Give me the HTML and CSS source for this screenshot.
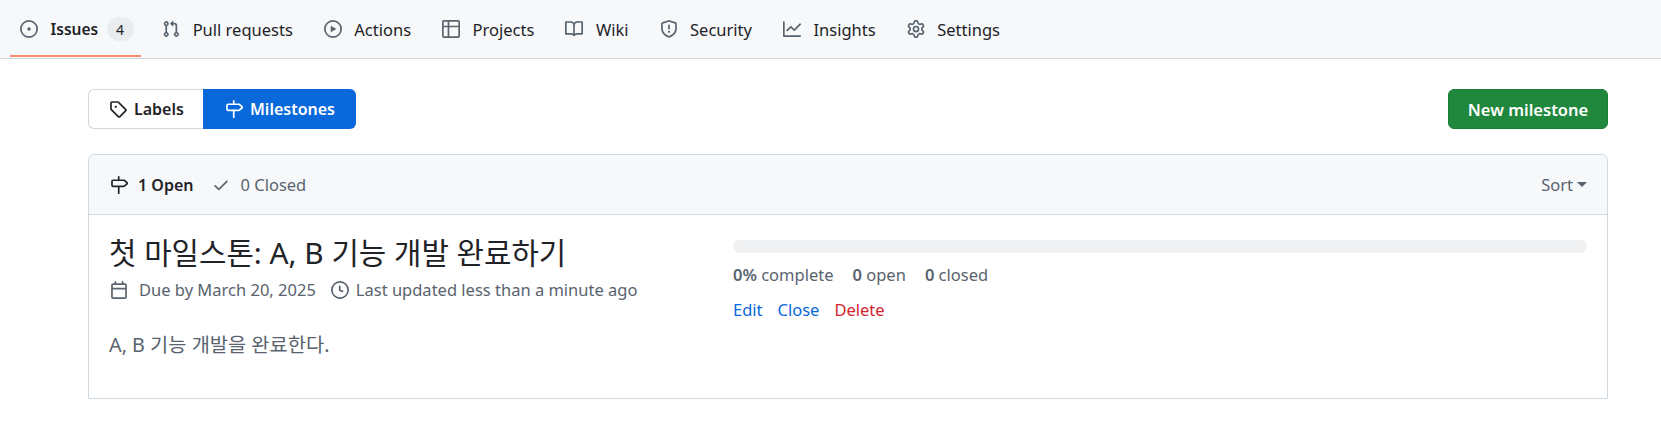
FILE: index.html
```html
<!DOCTYPE html>
<html lang="ko">
<head>
<meta charset="utf-8">
<title>Milestones</title>
<link rel="stylesheet" href="styles.css">
</head>
<body>
<svg class="sprite" aria-hidden="true">
  <symbol id="i-issue" viewBox="0 0 16 16"><path d="M8 9.5a1.5 1.5 0 1 0 0-3 1.5 1.5 0 0 0 0 3Z"/><path d="M8 0a8 8 0 1 1 0 16A8 8 0 0 1 8 0ZM1.5 8a6.5 6.5 0 1 0 13 0 6.5 6.5 0 0 0-13 0Z"/></symbol>
  <symbol id="i-pr" viewBox="0 0 16 16"><path d="M1.5 3.25a2.25 2.25 0 1 1 3 2.122v5.256a2.251 2.251 0 1 1-1.5 0V5.372A2.25 2.25 0 0 1 1.5 3.25Zm5.677-.177L9.573.677A.25.25 0 0 1 10 .854V2.5h1A2.5 2.5 0 0 1 13.5 5v5.628a2.251 2.251 0 1 1-1.5 0V5a1 1 0 0 0-1-1h-1v1.646a.25.25 0 0 1-.427.177L7.177 3.427a.25.25 0 0 1 0-.354ZM3.75 2.5a.75.75 0 1 0 0 1.5.75.75 0 0 0 0-1.5Zm0 9.5a.75.75 0 1 0 0 1.5.75.75 0 0 0 0-1.5Zm8.25.75a.75.75 0 1 0 1.5 0 .75.75 0 0 0-1.5 0Z"/></symbol>
  <symbol id="i-play" viewBox="0 0 16 16"><path d="M8 0a8 8 0 1 1 0 16A8 8 0 0 1 8 0ZM1.5 8a6.5 6.5 0 1 0 13 0 6.5 6.5 0 0 0-13 0Zm4.879-2.773 4.264 2.559a.25.25 0 0 1 0 .428l-4.264 2.559A.25.25 0 0 1 6 10.559V5.442a.25.25 0 0 1 .379-.215Z"/></symbol>
  <symbol id="i-table" viewBox="0 0 16 16"><path d="M0 1.75C0 .784.784 0 1.75 0h12.5C15.216 0 16 .784 16 1.75v12.5A1.75 1.75 0 0 1 14.25 16H1.75A1.75 1.75 0 0 1 0 14.25ZM6.5 6.5v8h7.75a.25.25 0 0 0 .25-.25V6.5Zm8-1.5V1.75a.25.25 0 0 0-.25-.25H6.5V5Zm-13 1.5v7.75c0 .138.112.25.25.25H5v-8ZM5 5V1.5H1.75a.25.25 0 0 0-.25.25V5Z"/></symbol>
  <symbol id="i-book" viewBox="0 0 16 16"><path d="M0 1.75A.75.75 0 0 1 .75 1h4.253c1.227 0 2.317.59 3 1.501A3.743 3.743 0 0 1 11.006 1h4.245a.75.75 0 0 1 .75.75v10.5a.75.75 0 0 1-.75.75h-4.507a2.25 2.25 0 0 0-1.591.659l-.622.621a.75.75 0 0 1-1.06 0l-.622-.621A2.25 2.25 0 0 0 5.258 13H.75a.75.75 0 0 1-.75-.75Zm7.251 10.324.004-5.073-.002-2.253A2.25 2.25 0 0 0 5.003 2.5H1.5v9h3.757a3.75 3.75 0 0 1 1.994.574ZM8.755 4.75l-.004 7.322a3.752 3.752 0 0 1 1.992-.572H14.5v-9h-3.495a2.25 2.25 0 0 0-2.25 2.25Z"/></symbol>
  <symbol id="i-shield" viewBox="0 0 16 16"><path d="M7.467.133a1.748 1.748 0 0 1 1.066 0l5.25 1.68A1.75 1.75 0 0 1 15 3.48V7c0 1.566-.32 3.182-1.303 4.682-.983 1.498-2.585 2.813-5.032 3.855a1.697 1.697 0 0 1-1.33 0c-2.447-1.042-4.049-2.357-5.032-3.855C1.32 10.182 1 8.566 1 7V3.48a1.75 1.75 0 0 1 1.217-1.667Zm.61 1.429a.25.25 0 0 0-.153 0l-5.25 1.68a.25.25 0 0 0-.174.238V7c0 1.358.275 2.666 1.057 3.86.784 1.194 2.121 2.34 4.366 3.297a.196.196 0 0 0 .154 0c2.245-.956 3.582-2.104 4.366-3.298C13.225 9.666 13.5 8.36 13.5 7V3.48a.251.251 0 0 0-.174-.237l-5.25-1.68ZM8.75 4.75v3a.75.75 0 0 1-1.5 0v-3a.75.75 0 0 1 1.5 0ZM9 10.5a1 1 0 1 1-2 0 1 1 0 0 1 2 0Z"/></symbol>
  <symbol id="i-graph" viewBox="0 0 16 16"><path d="M1.5 1.75V13.5h13.75a.75.75 0 0 1 0 1.5H.75a.75.75 0 0 1-.75-.75V1.75a.75.75 0 0 1 1.5 0Zm14.28 2.53-5.25 5.25a.75.75 0 0 1-1.06 0L7 7.06 4.28 9.78a.751.751 0 0 1-1.042-.018.751.751 0 0 1-.018-1.042l3.25-3.25a.75.75 0 0 1 1.06 0L10 7.94l4.72-4.72a.751.751 0 0 1 1.042.018.751.751 0 0 1 .018 1.042Z"/></symbol>
  <symbol id="i-gear" viewBox="0 0 16 16"><path d="M8 0a8.2 8.2 0 0 1 .701.031C9.444.095 9.99.645 10.16 1.29l.288 1.107c.018.066.079.158.212.224.231.114.454.243.668.386.123.082.233.09.299.071l1.103-.303c.644-.176 1.392.021 1.82.63.27.385.506.792.704 1.218.315.675.111 1.422-.364 1.891l-.814.806c-.049.048-.098.147-.088.294.016.257.016.515 0 .772-.01.147.038.246.088.294l.814.806c.475.469.679 1.216.364 1.891a7.977 7.977 0 0 1-.704 1.217c-.428.61-1.176.807-1.82.63l-1.102-.302c-.067-.019-.177-.011-.3.071a5.909 5.909 0 0 1-.668.386c-.133.066-.194.158-.211.224l-.29 1.106c-.168.646-.715 1.196-1.458 1.26a8.006 8.006 0 0 1-1.402 0c-.743-.064-1.289-.614-1.458-1.26l-.289-1.106c-.018-.066-.079-.158-.212-.224a5.738 5.738 0 0 1-.668-.386c-.123-.082-.233-.09-.299-.071l-1.103.303c-.644.176-1.392-.021-1.82-.63a8.12 8.12 0 0 1-.704-1.218c-.315-.675-.111-1.422.363-1.891l.815-.806c.05-.048.098-.147.088-.294a6.214 6.214 0 0 1 0-.772c.01-.147-.038-.246-.088-.294l-.815-.806C.635 6.045.431 5.298.746 4.623a7.92 7.92 0 0 1 .704-1.217c.428-.61 1.176-.807 1.82-.63l1.102.302c.067.019.177.011.3-.071.214-.143.437-.272.668-.386.133-.066.194-.158.211-.224l.29-1.106C6.009.645 6.556.095 7.299.03 7.53.01 7.764 0 8 0Zm-.571 1.525c-.036.003-.108.036-.137.146l-.289 1.105c-.147.561-.549.967-.998 1.189-.173.086-.34.183-.5.29-.417.278-.97.423-1.529.27l-1.103-.303c-.109-.03-.175.016-.195.045-.22.312-.412.644-.573.99-.014.031-.021.11.059.19l.815.806c.411.406.562.957.53 1.456a4.709 4.709 0 0 0 0 .582c.032.499-.119 1.05-.53 1.456l-.815.806c-.081.08-.073.159-.059.19.162.346.353.677.573.989.02.03.085.076.195.046l1.102-.303c.56-.153 1.113-.008 1.53.27.161.107.328.204.501.29.447.222.85.629.997 1.189l.289 1.105c.029.109.101.143.137.146a6.6 6.6 0 0 0 1.142 0c.036-.003.108-.036.137-.146l.289-1.105c.147-.561.549-.967.998-1.189.173-.086.34-.183.5-.29.417-.278.97-.423 1.529-.27l1.103.303c.109.029.175-.016.195-.045.22-.313.411-.644.573-.99.014-.031.021-.11-.059-.19l-.815-.806c-.411-.406-.562-.957-.53-1.456a4.709 4.709 0 0 0 0-.582c-.032-.499.119-1.05.53-1.456l.815-.806c.081-.08.073-.159.059-.19a6.464 6.464 0 0 0-.573-.989c-.02-.03-.085-.076-.195-.046l-1.102.303c-.56.153-1.113.008-1.53-.27a4.44 4.44 0 0 0-.501-.29c-.447-.222-.85-.629-.997-1.189l-.289-1.105c-.029-.11-.101-.143-.137-.146a6.6 6.6 0 0 0-1.142 0ZM11 8a3 3 0 1 1-6 0 3 3 0 0 1 6 0ZM9.5 8a1.5 1.5 0 1 0-3.001.001A1.5 1.5 0 0 0 9.5 8Z"/></symbol>
  <symbol id="i-tag" viewBox="0 0 16 16"><path d="M1 7.775V2.75C1 1.784 1.784 1 2.75 1h5.025c.464 0 .91.184 1.238.513l6.25 6.25a1.75 1.75 0 0 1 0 2.474l-5.026 5.026a1.75 1.75 0 0 1-2.474 0l-6.25-6.25A1.752 1.752 0 0 1 1 7.775Zm1.5 0c0 .066.026.13.073.177l6.25 6.25a.25.25 0 0 0 .354 0l5.025-5.025a.25.25 0 0 0 0-.354l-6.25-6.25a.25.25 0 0 0-.177-.073H2.75a.25.25 0 0 0-.25.25ZM6 5a1 1 0 1 1 0 2 1 1 0 0 1 0-2Z"/></symbol>
  <symbol id="i-milestone" viewBox="0 0 16 16"><path d="M7.75 0a.75.75 0 0 1 .75.75V3h3.634c.414 0 .814.147 1.13.414l2.07 1.75a1.75 1.75 0 0 1 0 2.672l-2.07 1.75a1.75 1.75 0 0 1-1.13.414H8.5v5.25a.75.75 0 0 1-1.5 0V10H2.75A1.75 1.75 0 0 1 1 8.25v-3.5C1 3.784 1.784 3 2.75 3H7V.75A.75.75 0 0 1 7.75 0Zm4.384 8.5a.25.25 0 0 0 .161-.06l2.07-1.75a.25.25 0 0 0 0-.38l-2.07-1.75a.25.25 0 0 0-.161-.06H2.75a.25.25 0 0 0-.25.25v3.5c0 .138.112.25.25.25h9.384Z"/></symbol>
  <symbol id="i-check" viewBox="0 0 16 16"><path d="M13.78 4.22a.75.75 0 0 1 0 1.06l-7.25 7.25a.75.75 0 0 1-1.06 0L2.22 9.28a.751.751 0 0 1 .018-1.042.751.751 0 0 1 1.042-.018L6 10.94l6.72-6.72a.75.75 0 0 1 1.06 0Z"/></symbol>
  <symbol id="i-calendar" viewBox="0 0 16 16"><path d="M4.75 0a.75.75 0 0 1 .75.75V2h5V.75a.75.75 0 0 1 1.5 0V2h1.25c.966 0 1.75.784 1.75 1.75v10.5A1.75 1.75 0 0 1 13.25 16H2.75A1.75 1.75 0 0 1 1 14.25V3.75C1 2.784 1.784 2 2.75 2H4V.75A.75.75 0 0 1 4.75 0ZM2.5 7.5v6.75c0 .138.112.25.25.25h10.5a.25.25 0 0 0 .25-.25V7.5Zm10.75-4H2.75a.25.25 0 0 0-.25.25V6h11V3.75a.25.25 0 0 0-.25-.25Z"/></symbol>
  <symbol id="i-clock" viewBox="0 0 16 16"><path d="M8 0a8 8 0 1 1 0 16A8 8 0 0 1 8 0ZM1.5 8a6.5 6.5 0 1 0 13 0 6.5 6.5 0 0 0-13 0Zm7-3.25v2.992l2.028.812a.75.75 0 0 1-.557 1.392l-2.5-1A.751.751 0 0 1 7 8.25v-3.5a.75.75 0 0 1 1.5 0Z"/></symbol>
</svg>

<nav class="repo-nav">
  <a class="tab tab-selected"><svg class="icon muted-icon"><use href="#i-issue"/></svg><span class="tab-label-strong">Issues</span><span class="counter">4</span></a>
  <a class="tab"><svg class="icon muted-icon"><use href="#i-pr"/></svg><span>Pull requests</span></a>
  <a class="tab"><svg class="icon muted-icon"><use href="#i-play"/></svg><span>Actions</span></a>
  <a class="tab"><svg class="icon muted-icon"><use href="#i-table"/></svg><span>Projects</span></a>
  <a class="tab"><svg class="icon muted-icon"><use href="#i-book"/></svg><span>Wiki</span></a>
  <a class="tab"><svg class="icon muted-icon"><use href="#i-shield"/></svg><span>Security</span></a>
  <a class="tab"><svg class="icon muted-icon"><use href="#i-graph"/></svg><span>Insights</span></a>
  <a class="tab"><svg class="icon muted-icon"><use href="#i-gear"/></svg><span>Settings</span></a>
</nav>

<main class="content">
  <div class="toolbar">
    <div class="segmented">
      <a class="seg seg-labels"><svg class="icon"><use href="#i-tag"/></svg>Labels</a>
      <a class="seg seg-active"><svg class="icon"><use href="#i-milestone"/></svg>Milestones</a>
    </div>
    <a class="btn-primary">New milestone</a>
  </div>

  <section class="box">
    <header class="box-header">
      <div class="states">
        <a class="state state-open"><svg class="icon"><use href="#i-milestone"/></svg>1 Open</a>
        <a class="state state-closed"><svg class="icon muted-icon"><use href="#i-check"/></svg>0 Closed</a>
      </div>
      <a class="sort">Sort<span class="caret"></span></a>
    </header>
    <article class="milestone">
      <div class="ms-left">
        <h2 class="ms-title">첫 마일스톤: A, B 기능 개발 완료하기</h2>
        <div class="ms-meta">
          <span class="meta-due"><svg class="icon muted-icon"><use href="#i-calendar"/></svg>Due by March 20, 2025</span>
          <span class="meta-updated"><svg class="icon muted-icon"><use href="#i-clock"/></svg>Last updated less than a minute ago</span>
        </div>
        <p class="ms-desc">A, B 기능 개발을 완료한다.</p>
      </div>
      <div class="ms-right">
        <div class="progress"></div>
        <div class="stats">
          <span><b>0%</b> complete</span>
          <span><b>0</b> open</span>
          <span><b>0</b> closed</span>
        </div>
        <div class="actions">
          <a class="link">Edit</a>
          <a class="link">Close</a>
          <a class="link link-danger">Delete</a>
        </div>
      </div>
    </article>
  </section>
</main>
</body>
</html>
```
FILE: styles.css
```css
* { box-sizing: border-box; }
html, body { margin: 0; padding: 0; background: #fff; }
body {
  font-family: "Noto Sans", "Noto Sans CJK KR", sans-serif;
  font-size: 16.5px;
  color: #1f2328;
  overflow: hidden;
}
.sprite { display: none; }
.icon { width: 18px; height: 18px; fill: currentColor; flex: none; }
.muted-icon { color: #59636e; }

.repo-nav {
  display: flex;
  height: 59px;
  padding: 0 0 0 10px;
  gap: 11px;
  background: #f6f8fa;
  border-bottom: 1px solid #d1d9e0;
}
.tab {
  display: flex;
  align-items: center;
  gap: 12.5px;
  height: 58px;
  padding: 0 10px;
  color: #1f2328;
  white-space: nowrap;
}
.tab-selected {
  height: 57px;
  padding: 3px 7.5px 0 10px;
  border-bottom: 2px solid #fd8c73;
}
.tab-label-strong { font-weight: 600; font-size: 15.5px; }
.counter {
  display: inline-flex;
  align-items: center;
  justify-content: center;
  min-width: 27px;
  height: 24px;
  border-radius: 12px;
  background: #eaedf0;
  font-size: 14px;
  margin-left: -4px;
}

.content { padding: 30px 53px 0 88px; }
.toolbar { display: flex; justify-content: space-between; margin-bottom: 25px; }
.segmented { display: flex; height: 40px; }
.seg {
  display: flex;
  align-items: center;
  gap: 7px;
  font-weight: 600;
  font-size: 16px;
}
.seg-labels {
  width: 115px;
  padding-left: 20px;
  border: 1px solid #d1d9e0;
  border-right: 0;
  border-radius: 6px 0 0 6px;
  color: #1f2328;
}
.seg-active {
  width: 153px;
  padding-left: 22px;
  border-radius: 0 6px 6px 0;
  background: #0969da;
  color: #fff;
}
.btn-primary {
  display: flex;
  align-items: center;
  justify-content: center;
  width: 160px;
  height: 40px;
  border-radius: 6px;
  border: 1px solid #1a7f37;
  background: #1f883d;
  color: #fff;
  font-weight: 600;
}

.box { border: 1px solid #d1d9e0; border-radius: 6px 6px 0 0; height: 245px; }
.box-header {
  display: flex;
  align-items: center;
  justify-content: space-between;
  height: 60px;
  padding: 0 20px 0 21px;
  background: #f6f8fa;
  border-bottom: 1px solid #d1d9e0;
  border-radius: 6px 6px 0 0;
}
.states { display: flex; gap: 18px; }
.state { display: flex; align-items: center; gap: 10px; }
.state-open { font-weight: 600; color: #1f2328; font-size: 16px; }
.state-closed { color: #59636e; gap: 11px; }
.sort { display: flex; align-items: center; gap: 4px; color: #59636e; }
.caret {
  width: 0;
  height: 0;
  border-style: solid;
  border-width: 5px 5px 0;
  border-color: #59636e transparent transparent;
}

.milestone { display: flex; padding: 0 20px 0 21px; }
.ms-left { width: 623px; flex: none; padding-top: 19px; }
.ms-title {
  margin: 0 0 0 -1px;
  font-size: 29.8px;
  font-weight: 400;
  line-height: 38px;
  color: #1f2328;
}
.ms-meta {
  display: flex;
  gap: 15px;
  margin-top: 6px;
  line-height: 24px;
  color: #59636e;
}
.meta-due, .meta-updated { display: flex; align-items: center; }
.meta-due { gap: 11px; }
.meta-updated { gap: 7px; }
.ms-desc {
  margin: 31px 0 0 -1px;
  font-size: 19.8px;
  line-height: 24px;
  color: #59636e;
}
.ms-right { flex: 1; padding-top: 25px; }
.progress { height: 13px; border-radius: 7px; background: #eff1f3; }
.stats {
  display: flex;
  gap: 19px;
  margin-top: 10px;
  line-height: 24px;
  color: #59636e;
}
.stats b { font-weight: 600; }
.actions { display: flex; gap: 15px; margin-top: 11px; line-height: 24px; }
.link { color: #0969da; }
.link-danger { color: #d1242f; }
```
